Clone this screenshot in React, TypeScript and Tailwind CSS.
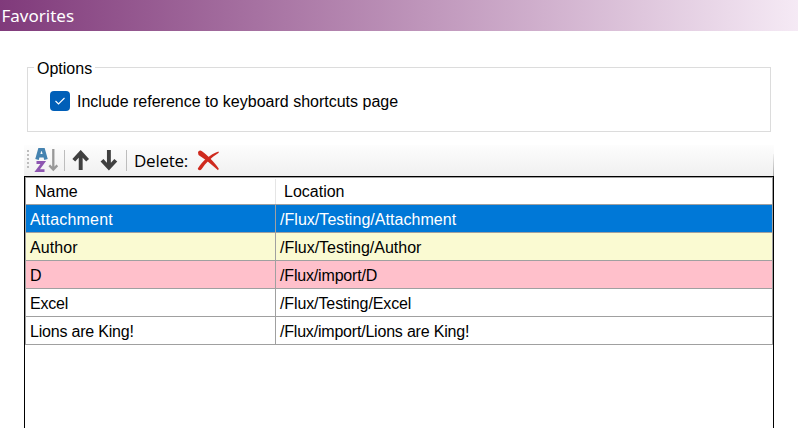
import React from "react";

type Row = { name: string; location: string; tone: string; nameFit: string; locationFit: string };

const rows: Row[] = [
  { name: "Attachment", location: "/Flux/Testing/Attachment", tone: "bg-[#0078d7] text-white", nameFit: "tracking-[0.2px]", locationFit: "tracking-[0.04px]" },
  { name: "Author", location: "/Flux/Testing/Author", tone: "bg-[#fafad2]", nameFit: "tracking-[0.1px]", locationFit: "tracking-normal" },
  { name: "D", location: "/Flux/import/D", tone: "bg-[#ffc0cb]", nameFit: "tracking-normal", locationFit: "tracking-[-0.17px]" },
  { name: "Excel", location: "/Flux/Testing/Excel", tone: "bg-white", nameFit: "tracking-[-0.2px]", locationFit: "tracking-[-0.11px]" },
  { name: "Lions are King!", location: "/Flux/import/Lions are King!", tone: "bg-white", nameFit: "tracking-[-0.2px]", locationFit: "tracking-[-0.2px]" },
];

function SortIcon() {
  return (
    <svg width="26" height="26" viewBox="0 0 26 26" fill="none" className="shrink-0">
      <path d="M3 11.500 5.800 1.500h3.400L12 11.500M4.500 7.800h6" stroke="#4583b0" strokeWidth="3.600" />
      <path d="M2.500 14.500h6.800L3.200 22.600h7.300" stroke="#8d55b0" strokeWidth="2.800" />
      <path d="M19.300 1v20M15.300 17.400l4 4.200 4-4.200" stroke="#999" strokeWidth="2.300" />
    </svg>
  );
}

function UpIcon() {
  return (
    <svg width="18" height="22" viewBox="0 0 18 22" fill="none" className="shrink-0">
      <path d="M8.700 20V3M1.800 10.300 8.700 2.800l6.900 7.500" stroke="#404040" strokeWidth="3.900" />
    </svg>
  );
}

function DownIcon() {
  return (
    <svg width="18" height="22" viewBox="0 0 18 22" fill="none" className="shrink-0">
      <path d="M8.900 0v17.500M2 10.200l6.900 7.500 6.900-7.500" stroke="#404040" strokeWidth="3.900" />
    </svg>
  );
}

function DeleteIcon() {
  return (
    <svg width="24" height="22" viewBox="0 0 24 22" className="shrink-0">
      <path d="M1 2.600C1.500.6 3.200 0 5 1.300 10 5 17 11.500 21.800 18.800L21 20.200C15 15 8.500 9.500 1.500 5Z" fill="#cf2a1e" />
      <path d="M21.500 1.600 21.800 2.800C14 7.500 8.500 13 4.500 19.200 3.500 20.800 1 20.500.8 18.500 5.500 11 13 4.500 21.500 1.600Z" fill="#cf2a1e" />
    </svg>
  );
}

export default function App() {
  return (
    <div className="flex h-[428px] w-[798px] flex-col overflow-hidden bg-white font-['Liberation_Sans',Arial,sans-serif] text-[16px] leading-[18px] text-black">
      <header className="flex h-[31px] shrink-0 items-center bg-linear-to-r from-[#803a7b] to-[#f5eaf5] pl-[1.5px] font-['Noto_Sans',sans-serif] text-[17px] text-white">
        Favorites
      </header>

      <fieldset className="mt-[27px] ml-[27px] h-[74px] w-[744px] shrink-0 border border-[#dcdcdc] pl-[22px]">
        <legend className="-ml-[16px] h-[18px] px-[3px] pt-[2px]">Options</legend>
        <label className="mt-[15px] flex items-center gap-[7px]">
          <span className="flex h-5 w-5 items-center justify-center rounded-[4px] bg-[#005fb8]">
            <svg width="12" height="10" viewBox="0 0 12 10" fill="none">
              <path d="m1.500 5 3 3L10.500 2" stroke="white" strokeWidth="1.100" />
            </svg>
          </span>
          <span className="pt-[2px] whitespace-nowrap">Include reference to keyboard shortcuts page</span>
        </label>
      </fieldset>

      <div className="mt-[13px] ml-6 flex h-[31px] w-[750px] shrink-0 items-center bg-linear-to-b from-[#fdfdfd] to-[#f0f0f0]">
        <div className="ml-[3px] flex flex-col gap-[2px] pb-[3px]">
          <i className="h-[2px] w-[2px] bg-[#bdbdbd]" />
          <i className="h-[2px] w-[2px] bg-[#bdbdbd]" />
          <i className="h-[2px] w-[2px] bg-[#bdbdbd]" />
          <i className="h-[2px] w-[2px] bg-[#bdbdbd]" />
          <i className="h-[2px] w-[2px] bg-[#bdbdbd]" />
        </div>
        <div className="ml-[5px]"><SortIcon /></div>
        <div className="ml-[4px] h-[21px] w-px bg-[#bdbdbd]" />
        <div className="ml-[7px]"><UpIcon /></div>
        <div className="ml-[10px]"><DownIcon /></div>
        <div className="ml-[8px] h-[21px] w-px bg-[#bdbdbd]" />
        <span className="ml-[7px] w-[55px] font-['Open_Sans','Noto_Sans',sans-serif] text-[17px] tracking-[-0.25px] whitespace-nowrap">Delete:</span>
        <div className="ml-[8px]"><DeleteIcon /></div>
        <div className="mt-[8px] ml-auto h-[22px] w-px bg-linear-to-b from-[#f0f0f0] to-[#a8a8a8]" />
      </div>

      <main className="ml-6 w-[750px] flex-1 border border-b-0 border-black">
        <div className="border border-b-0 border-[#a0a0a0]">
          <div className="flex h-[27px] items-center border-b border-[#a0a0a0]">
            <div className="flex h-[25px] w-[250px] items-center border-r border-[#e5e5e5] pt-[2px] pl-[9px]">Name</div>
            <div className="pt-[2px] pl-[8px]">Location</div>
          </div>
          {rows.map((row) => (
            <div key={row.name} className={"flex h-7 border-b border-[#a0a0a0] " + row.tone}>
              <div className={"flex w-[250px] items-center border-r border-[#a0a0a0] pt-[2px] pl-[4px] " + row.nameFit}>{row.name}</div>
              <div className={"flex flex-1 items-center pt-[2px] pl-[4px] " + row.locationFit}>{row.location}</div>
            </div>
          ))}
        </div>
      </main>
    </div>
  );
}
